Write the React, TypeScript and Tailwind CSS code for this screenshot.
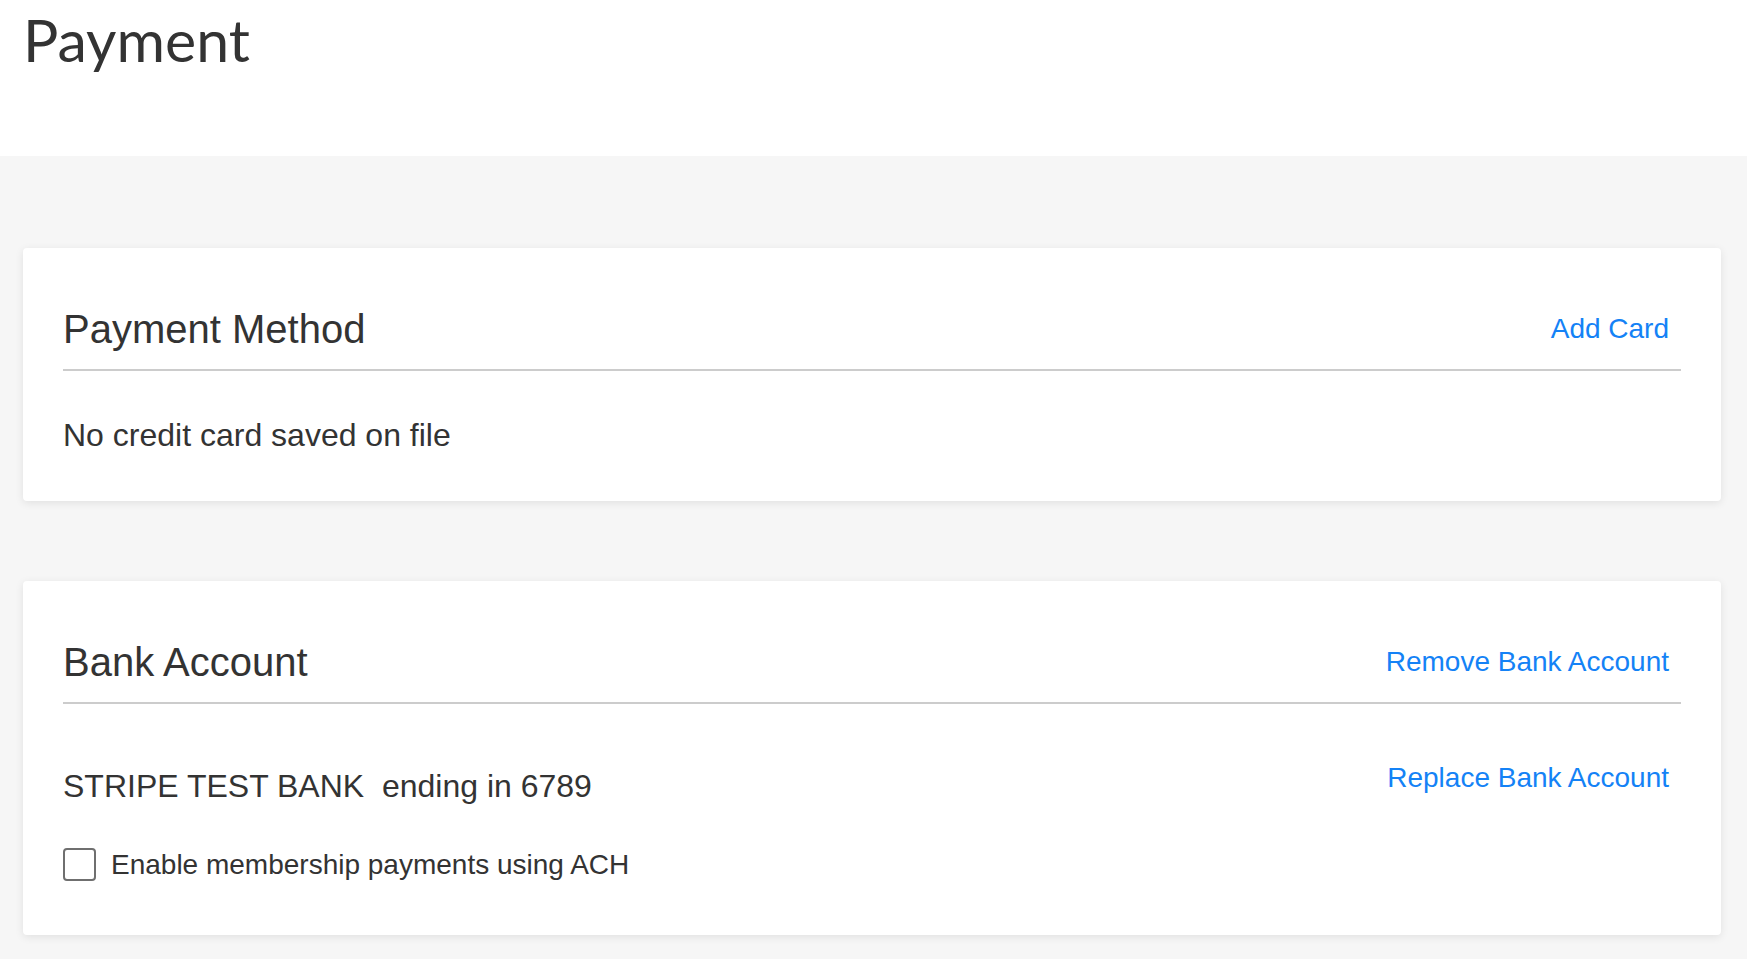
import React from "react";

const sans = "font-['Liberation_Sans',Arial,sans-serif]";

function Card({ children }: { children: React.ReactNode }) {
  return (
    <section className="rounded-[4px] bg-white px-[40px] pt-[57px] shadow-[0_2px_8px_rgba(0,0,0,0.09)]">
      {children}
    </section>
  );
}

function CardHeader({ title, action }: { title: string; action: string }) {
  return (
    <div className="border-b-2 border-[#cccccc] pb-[16px]">
      <div className="flex items-center justify-between">
        <h2 className="text-[40px] leading-[48px] font-normal text-[#333333]">{title}</h2>
        <a href="#" className="mr-[12px] text-[28px] leading-[32px] text-[#1482f6]">
          {action}
        </a>
      </div>
    </div>
  );
}

export default function App() {
  return (
    <div className={`min-h-screen bg-[#f6f6f6] ${sans}`}>
      <header className="h-[156px] bg-white pl-[23px] pt-[10px]">
        <h1 className="font-['Lato','Noto_Sans',sans-serif] text-[59px] leading-none font-normal text-[#333333]">
          Payment
        </h1>
      </header>

      <main className="flex flex-col gap-[80px] pl-[23px] pr-[26px] pt-[92px] pb-[24px]">
        <Card>
          <CardHeader title="Payment Method" action="Add Card" />
          <p className="pt-[44px] pb-[46px] text-[32px] leading-[40px] text-[#333333]">
            No credit card saved on file
          </p>
        </Card>

        <Card>
          <CardHeader title="Bank Account" action="Remove Bank Account" />
          <div className="flex items-start justify-between pt-[58px]">
            <p className="mt-[4px] text-[32px] leading-[40px] text-[#333333]">
              STRIPE TEST BANK{"\u00a0\u00a0"}ending in 6789
            </p>
            <a href="#" className="mr-[12px] text-[28px] leading-[32px] text-[#1482f6]">
              Replace Bank Account
            </a>
          </div>
          <label className="mt-[42px] flex items-center gap-[15px] pb-[54px]">
            <span className="block h-[33px] w-[33px] rounded-[4px] border-[2.5px] border-[#6f6f6f] bg-white" />
            <span className="text-[28px] leading-[32px] text-[#333333]">
              Enable membership payments using ACH
            </span>
          </label>
        </Card>
      </main>
    </div>
  );
}
